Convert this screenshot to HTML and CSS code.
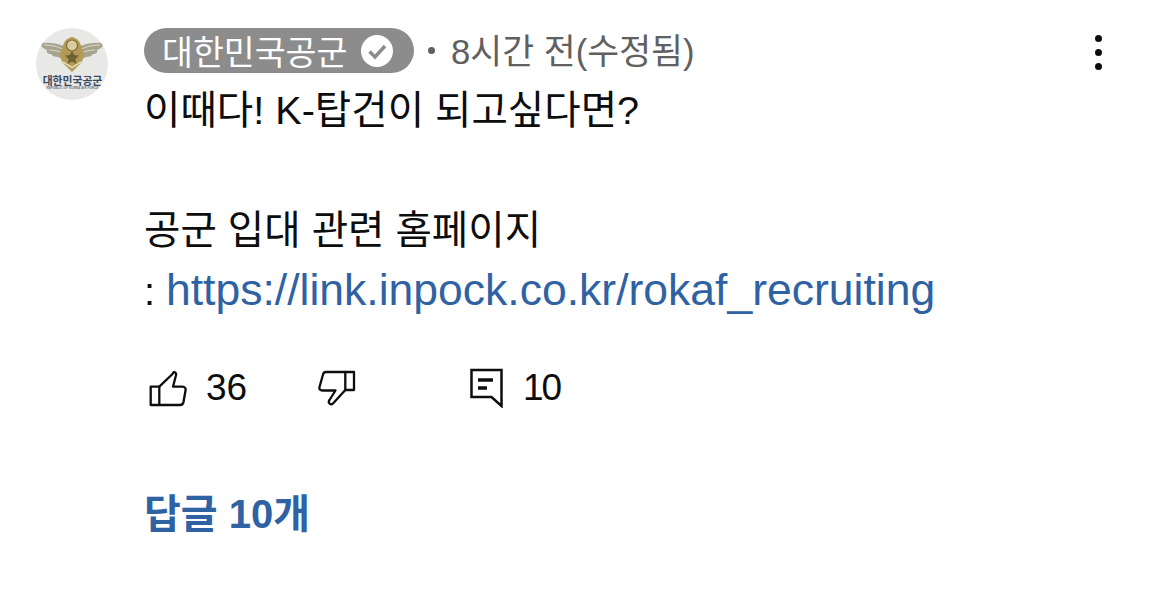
FILE: index.html
```html
<!DOCTYPE html>
<html lang="ko">
<head>
<meta charset="utf-8">
<title>댓글</title>
<link rel="stylesheet" href="styles.css">
</head>
<body>
<main class="comment">
  <div class="avatar">
    <svg class="emblem" viewBox="0 0 72 72" width="72" height="72" aria-hidden="true">
      <path d="M31 19 C22 15 12 14 4 15 C5 19 8 21 11 22 C10 24 12 26 15 26 C16 28 19 29 22 29 C25 31 28 31 31 30 Z" fill="#a8a38e"/>
      <path d="M41 19 C50 15 60 14 68 15 C67 19 64 21 61 22 C62 24 60 26 57 26 C56 28 53 29 50 29 C47 31 44 31 41 30 Z" fill="#a8a38e"/>
      <path d="M8 17 C16 17 24 19 30 23 M13 22 C19 22 25 24 30 26 M64 17 C56 17 48 19 42 23 M59 22 C53 22 47 24 42 26" fill="none" stroke="#dcd8c8" stroke-width="1"/>
      <path d="M36 9 C41 10 45 14 45 19 L48 25 C48 31 45 36 41 39 L36 44 L31 39 C27 36 24 31 24 25 L27 19 C27 14 31 10 36 9 Z" fill="#b59a55"/>
      <path d="M27 34 L36 39.500 L45 34" fill="none" stroke="#e2d7a8" stroke-width="1.500"/>
      <circle cx="36" cy="17.500" r="5.500" fill="#d9cda0" stroke="#7a6a38" stroke-width="1.200"/>
      <path d="M36 22.500 L38.200 27 L43 27.500 L39.500 31 L40.500 36 L36 33.500 L31.500 36 L32.500 31 L29 27.500 L33.800 27 Z" fill="#6e6232"/>
      <text class="emblem-name" x="36.500" y="56.500" text-anchor="middle">대한민국공군</text>
      <text class="emblem-sub" x="36.500" y="61" text-anchor="middle">REPUBLIC OF KOREA AIR FORCE</text>
    </svg>
  </div>
  <div class="body">
    <header class="head">
      <div class="byline">
        <span class="pill">
          <span>대한민국공군</span>
          <svg class="verified" viewBox="0 0 34 34" width="34" height="34" aria-hidden="true">
            <circle cx="17" cy="17" r="16" fill="#fff"/>
            <path d="M9.500 17.500 L15 23 L25 12" fill="none" stroke="#8c8c8c" stroke-width="3.400"/>
          </svg>
        </span>
        <span class="meta"><span class="dot"></span>8시간 전(수정됨)</span>
      </div>
      <div class="kebab" aria-label="더보기"><i></i><i></i><i></i></div>
    </header>
    <div class="text">
      <p>이때다! K-탑건이 되고싶다면?</p>
      <p class="blank">&nbsp;</p>
      <p>공군 입대 관련 홈페이지</p>
      <p>: <a class="link">https://link.inpock.co.kr/rokaf_recruiting</a></p>
    </div>
    <div class="actions">
      <div class="action like">
        <svg viewBox="0 0 38 38" width="38" height="38" fill="none" stroke="#0d0d0d" stroke-width="2.300" stroke-linejoin="round" aria-hidden="true">
          <path d="M1.700 17.700 H10.300 V36 H1.700 Z"/>
          <path d="M10.300 17.700 L23 5.500 C24 4 24.500 3.200 25.500 3 C27.500 3.500 27.300 5.500 26.800 7 L24 17.700 H33.500 C36 17.700 37 19.500 36.500 21.500 L34.500 33 C34 35.500 32.500 36 31 36 H10.300"/>
        </svg>
        <span>36</span>
      </div>
      <div class="action dislike">
        <svg viewBox="0 0 38 38" width="38" height="38" fill="none" stroke="#0d0d0d" stroke-width="2.300" stroke-linejoin="round" aria-hidden="true">
          <path d="M36 3 H27.300 V21 H36 Z"/>
          <path d="M27.300 21 L15 34.500 C14 35.500 12.500 35.500 11.500 34.500 C10.500 33.500 10.500 32.500 11.500 31 L17.500 21.500 H4.500 C2 21.500 1 20 1.500 18 L5 5.500 C5.500 3.500 6.500 3 8 3 H27.300"/>
        </svg>
      </div>
      <div class="action reply">
        <svg viewBox="0 0 34 40" width="34" height="40" fill="none" stroke="#0d0d0d" stroke-width="2.500" aria-hidden="true">
          <path d="M1.500 2 H31.500 V38 L21.500 29 H1.500 Z"/>
          <path d="M8 12 H23 M8 20 H17" stroke-width="3.500"/>
        </svg>
        <span class="count">10</span>
      </div>
    </div>
    <div class="replies">답글 10개</div>
  </div>
</main>
</body>
</html>
```
FILE: styles.css
```css
* { box-sizing: border-box; }
html, body { margin: 0; height: 100%; background: #fff; }
body {
  overflow: hidden;
  font-family: "Liberation Sans", "Noto Sans CJK KR", sans-serif;
  color: #0d0d0d;
}
.comment { display: flex; gap: 36px; padding: 28px 0 0 36px; }
.avatar {
  flex: none;
  width: 72px;
  height: 72px;
  border-radius: 50%;
  background: #e8e8e6;
  overflow: hidden;
}
.emblem { display: block; }
.emblem-name { font: 700 10.800px "Noto Sans CJK KR", sans-serif; fill: #3a4a64; }
.emblem-sub { font: 700 3.200px "Liberation Sans", sans-serif; fill: #6f7680; }
.body { flex: 1; min-width: 0; padding-right: 68px; }
.head { display: flex; justify-content: space-between; align-items: flex-start; height: 45px; }
.byline { display: flex; align-items: center; height: 45px; }
.pill {
  display: flex;
  align-items: center;
  justify-content: space-between;
  height: 45px;
  width: 270px;
  padding: 0 20px 0 18px;
  border-radius: 23px;
  background: #8c8c8c;
  color: #fff;
  font-size: 33.600px;
  font-family: "Noto Sans CJK KR", sans-serif;
}
.verified { flex: none; }
.meta {
  display: flex;
  align-items: center;
  font-size: 34.700px;
  color: #606060;
  font-family: "Liberation Sans", "Noto Sans CJK KR", sans-serif;
  margin-top: -4px;
}
.dot {
  width: 7px;
  height: 7px;
  margin: 4px 16px 0 14px;
  border-radius: 50%;
  background: #606060;
}
.kebab {
  display: flex;
  flex-direction: column;
  gap: 7px;
  margin-top: 7px;
}
.kebab i { display: block; width: 7px; height: 7px; border-radius: 50%; background: #0d0d0d; }
.text { font-size: 39.600px; line-height: 60px; margin-top: 7px; }
.text p { margin: 0; white-space: nowrap; height: 60px; }
.link { color: #2f62a3; font-size: 44.500px; }
.actions { display: flex; align-items: center; margin-top: 46px; height: 44px; font-size: 37px; }
.action { display: flex; align-items: center; gap: 19px; }
.like { width: 174px; padding-left: 5px; }
.dislike { width: 152px; }
.reply { gap: 19px; }
.count { letter-spacing: -2px; }
.replies {
  margin-top: 72px;
  font-size: 40px;
  font-weight: 700;
  color: #2f62a3;
  font-family: "Liberation Sans", "Noto Sans CJK KR", sans-serif;
}
```
